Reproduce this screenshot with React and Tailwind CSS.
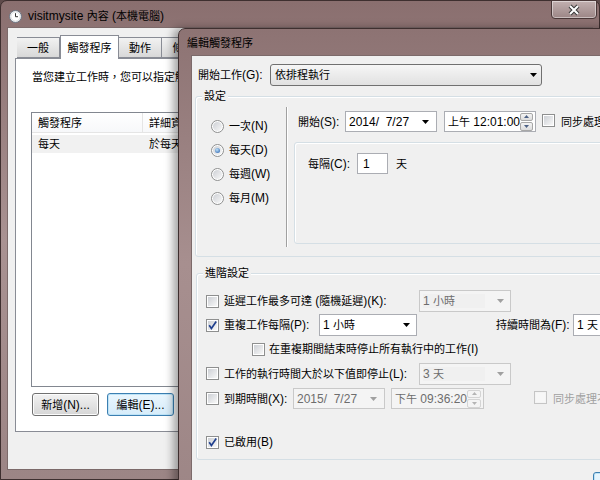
import React from "react";

// CJK runs are set a pixel smaller than the Latin text, like the Windows UI font
function t(s) {
  return String(s)
    .split(/([\u3000-\u9fff\uff00-\uffef]+)/)
    .map((p, i) =>
      i % 2 ? (
        <span key={i} className="text-[11px]">
          {p}
        </span>
      ) : (
        p
      )
    );
}

function Check({ on, off }) {
  return (
    <span
      className={
        "relative inline-block w-[13px] h-[13px] shrink-0 border " +
        (off ? "border-[#c5c5c5] bg-[#f4f4f4]" : "border-[#8e8f8f] bg-white")
      }
    >
      <span
        className={
          "absolute inset-[1px] " +
          (off ? "bg-[#f7f7f7]" : "bg-linear-to-br from-[#cdd0d5] to-[#f8f8f8]")
        }
      />
      {on && (
        <svg className="absolute left-0 top-0" width="11" height="11" viewBox="0 0 11 11">
          <path d="M2.2 5.2 L4.4 8.4 L9.2 1.6" fill="none" stroke="#1f3f8e" strokeWidth="1.7" />
        </svg>
      )}
    </span>
  );
}

function Radio({ on }) {
  return (
    <span className="relative inline-block w-[13px] h-[13px] shrink-0 rounded-full border border-[#8e8f8f] bg-white">
      <span className="absolute inset-[1px] rounded-full bg-linear-to-br from-[#cdd0d5] to-[#f8f8f8]" />
      {on && (
        <span className="absolute left-[3px] top-[3px] w-[5px] h-[5px] rounded-full bg-[radial-gradient(circle_at_40%_35%,#bfe3fa,#1f58a8)]" />
      )}
    </span>
  );
}

function Arrow({ color = "#000" }) {
  return (
    <svg width="7" height="4" viewBox="0 0 7 4">
      <path d="M0 0h7L3.5 4z" fill={color} />
    </svg>
  );
}

function Spin({ off }) {
  const c = off ? "#b4b4b4" : "#4d6185";
  const box = off
    ? "flex-1 flex items-center justify-center rounded-[2px] border border-[#d4d4d4] bg-[#f4f4f4]"
    : "flex-1 flex items-center justify-center rounded-[2px] border border-[#a7a7a7] bg-linear-to-b from-[#f4f4f4] to-[#dcdcdc]";
  return (
    <span className="flex flex-col w-[15px] h-[18px] gap-[1px]">
      <span className={box}>
        <svg width="5" height="3" viewBox="0 0 5 3"><path d="M0 3h5L2.5 0z" fill={c} /></svg>
      </span>
      <span className={box}>
        <svg width="5" height="3" viewBox="0 0 5 3"><path d="M0 0h5L2.5 3z" fill={c} /></svg>
      </span>
    </span>
  );
}

function Picker({ text, w, off, spin }) {
  return (
    <div
      className={
        "flex items-center h-[21px] border pl-[3px] pr-[2px] " +
        w +
        (off ? " border-[#c9c9c9] bg-[#f4f4f4] text-[#6d6d6d]" : " border-[#abadb3] bg-white")
      }
    >
      <span className="flex-1 whitespace-pre">{t(text)}</span>
      {spin ? <Spin off={off} /> : <span className="pr-[5px]"><Arrow color={off ? "#a0a0a0" : "#000"} /></span>}
    </div>
  );
}

function Combo({ text, w, off }) {
  return (
    <div
      className={
        "flex items-center h-[22px] border pl-[3px] pr-[6px] " +
        w +
        (off ? " border-[#c9c9c9] bg-[#f4f4f4] text-[#6d6d6d]" : " border-[#abadb3] bg-white")
      }
    >
      <span className={"flex-1 " + (off ? "bg-[#f0f0f0] mr-[12px]" : "")}>{t(text)}</span>
      <Arrow color={off ? "#a0a0a0" : "#000"} />
    </div>
  );
}

function Button({ children, focus }) {
  return (
    <div
      className={
        "w-[67px] h-[23px] flex items-center justify-center rounded-[3px] border " +
        (focus
          ? "border-[#3c7fb1] bg-linear-to-b from-[#eaf6fd] to-[#d6ecfa] shadow-[inset_0_0_0_1px_#bde3f7]"
          : "border-[#707070] bg-linear-to-b from-[#f2f2f2] to-[#d6d6d6] shadow-[inset_0_0_0_1px_#fcfcfc]")
      }
    >
      {t(children)}
    </div>
  );
}

function Tab({ children, w, on }) {
  return (
    <div
      className={
        "flex items-center justify-center border border-[#898c95] " +
        w +
        (on
          ? " h-[24px] bg-white border-b-0 relative z-10 -mb-[1px]"
          : " h-[21px] mt-[2px] bg-linear-to-b from-[#f2f2f2] to-[#d8d8d8] border-l-0")
      }
    >
      {t(children)}
    </div>
  );
}

export default function App() {
  return (
    <div className="relative w-[600px] h-[480px] overflow-hidden bg-[#5e4a4a] text-[12px] text-black leading-[14px] font-['Liberation_Sans','Noto_Sans_CJK_TC',sans-serif]">
      {/* background window */}
      <div className="absolute left-0 top-0 w-[600px] h-[480px] rounded-t-[7px] border border-[#3e2f2f] bg-linear-to-b from-[#8a6f6f] via-[#a99292] to-[#9c8585] flex flex-col">
        <div className="relative h-[26px] flex items-center pl-[8px] pt-[4px] shrink-0">
          <svg width="13" height="13" viewBox="0 0 13 13">
            <circle cx="6.5" cy="6.5" r="6" fill="#f4f4f4" stroke="#6b7583" />
            <circle cx="6.5" cy="6.5" r="4.6" fill="#fff" stroke="#c8ccd2" strokeWidth="0.6" />
            <path d="M6.5 3.2V6.7H9" fill="none" stroke="#333" strokeWidth="1" />
          </svg>
          <span className="ml-[6px]">{t("visitmysite 內容 (本機電腦)")}</span>
          <div className="absolute right-[2px] -top-[1px] w-[46px] h-[19px] rounded-b-[4px] border border-[#4a3838] bg-linear-to-b from-[#c2b0b0] to-[#9c8686] shadow-[inset_0_0_0_1px_rgba(255,255,255,0.45)] flex items-center justify-center">
            <svg width="14" height="12" viewBox="0 0 14 12">
              <path d="M3 2L11 10M11 2L3 10" stroke="#3a3a3a" strokeWidth="4" />
              <path d="M3 2L11 10M11 2L3 10" stroke="#fff" strokeWidth="2" />
            </svg>
          </div>
        </div>
        <div className="mx-[6px] mb-[9px] flex-1 bg-[#f0f0f0] border border-[#7c6a6a] flex flex-col">
          <div className="flex pl-[9px] pt-[7px]">
            <Tab w="w-[43px] border-l">一般</Tab>
            <Tab w="w-[59px]" on>觸發程序</Tab>
            <Tab w="w-[43px]">動作</Tab>
            <Tab w="w-[44px]">條件</Tab>
            <Tab w="w-[44px]">設定</Tab>
          </div>
          <div className="ml-[7px] w-[570px] h-[374px] bg-white border border-[#898c95] flex flex-col pl-[15px]">
            <div className="pt-[10px] h-[26px] leading-[16px] pl-[1px] whitespace-nowrap">
              {t("當您建立工作時，您可以指定觸發工作的條件。")}
            </div>
            <div className="mt-[27px] w-[320px] h-[275px] border border-[#828790] bg-white flex flex-col">
              <div className="flex h-[20px] border-b border-[#e5e5e5] bg-linear-to-b from-white to-[#f7f8fa]">
                <div className="w-[111px] pl-[6px] flex items-center border-r border-[#e5e5e5]">{t("觸發程序")}</div>
                <div className="pl-[6px] flex items-center">{t("詳細資料")}</div>
              </div>
              <div className="mt-[2px] h-[18px] flex items-center bg-[#f1f1f1]">
                <div className="w-[111px] pl-[6px]">{t("每天")}</div>
                <div className="pl-[6px]">{t("於每天 上午 12:01")}</div>
              </div>
            </div>
            <div className="mt-[6px] flex gap-[8px] pl-[1px]">
              <Button>新增(N)...</Button>
              <Button focus>編輯(E)...</Button>
            </div>
          </div>
        </div>
      </div>

      {/* dialog window */}
      <div className="absolute left-[178px] top-[28px] w-[440px] h-[470px] rounded-t-[7px] border border-[#3e2f2f] bg-linear-to-b from-[#8d7373] via-[#a78f8f] to-[#9d8686] shadow-[-5px_0_8px_rgba(0,0,0,0.35)] flex flex-col">
        <div className="h-[26px] flex items-center pl-[8px] pt-[2px] shrink-0">{t("編輯觸發程序")}</div>
        <div className="ml-[12px] flex-1 bg-[#f0f0f0] border border-[#7c6a6a] flex flex-col">
          <div className="mt-[8px] flex items-center h-[22px] pl-[6px]">
            <span className="w-[72px]">{t("開始工作(G):")}</span>
            <div className="w-[272px] h-[22px] flex items-center rounded-[3px] border border-[#707070] bg-linear-to-b from-[#f6f6f6] to-[#e1e1e1] pl-[4px] pr-[4px]">
              <span className="flex-1">{t("依排程執行")}</span>
              <Arrow />
            </div>
          </div>

          {/* 設定 */}
          <div className="relative mt-[10px] ml-[3px] w-[480px] h-[161px] border border-[#d5dfe5] rounded-[3px] shadow-[inset_1px_1px_0_#fff] flex">
            <span className="absolute -top-[8px] left-[6px] px-[2px] bg-[#f0f0f0]">{t("設定")}</span>
            <div className="w-[90px] pl-[15px] pt-[17px] flex flex-col">
              {[
                ["一次(N)", false],
                ["每天(D)", true],
                ["每週(W)", false],
                ["每月(M)", false],
              ].map(([s, on]) => (
                <div key={s} className="h-[24px] flex items-center gap-[5px]">
                  <Radio on={on} />
                  <span>{t(s)}</span>
                </div>
              ))}
            </div>
            <div className="mt-[10px] h-[140px] border-l border-[#a0a0a0] border-r border-r-white" />
            <div className="pl-[6px] flex flex-col">
              <div className="mt-[14px] h-[21px] pl-[4px] flex items-center">
                <span className="w-[47px]">{t("開始(S):")}</span>
                <Picker w="w-[92px]" text="2014/  7/27" />
                <span className="ml-[7px]"><Picker w="w-[92px]" text="上午 12:01:00" spin /></span>
                <span className="ml-[6px]"><Check /></span>
                <span className="ml-[6px] whitespace-nowrap">{t("同步處理不同時區(Z)")}</span>
              </div>
              <div className="mt-[10px] w-[360px] h-[102px] border border-[#d5dfe5] rounded-[3px] shadow-[inset_1px_1px_0_#fff] pl-[13px] pt-[10px]">
                <div className="flex items-center h-[21px]">
                  <span className="w-[49px]">{t("每隔(C):")}</span>
                  <div className="w-[31px] h-[21px] border border-[#abadb3] bg-white pl-[5px] flex items-center">1</div>
                  <span className="ml-[8px]">{t("天")}</span>
                </div>
              </div>
            </div>
          </div>

          {/* 進階設定 */}
          <div className="relative mt-[16px] ml-[4px] w-[480px] h-[187px] border border-[#d5dfe5] rounded-[3px] shadow-[inset_1px_1px_0_#fff] pt-[15px] flex flex-col">
            <span className="absolute -top-[8px] left-[6px] px-[2px] bg-[#f0f0f0]">{t("進階設定")}</span>
            <div className="h-[24px] pl-[9px] flex items-center">
              <Check />
              <span className="ml-[5px] w-[195px]">{t("延遲工作最多可達 (隨機延遲)(K):")}</span>
              <Combo w="w-[92px]" text="1 小時" off />
            </div>
            <div className="h-[24px] pl-[9px] flex items-center">
              <Check on />
              <span className="ml-[5px] w-[95px]">{t("重複工作每隔(P):")}</span>
              <Combo w="w-[98px]" text="1 小時" />
              <span className="ml-[79px] w-[77px] whitespace-nowrap">{t("持續時間為(F):")}</span>
              <Combo w="w-[80px]" text="1 天" />
            </div>
            <div className="h-[24px] pl-[55px] flex items-center">
              <Check />
              <span className="ml-[4px]">{t("在重複期間結束時停止所有執行中的工作(I)")}</span>
            </div>
            <div className="h-[25px] pl-[9px] flex items-center">
              <Check />
              <span className="ml-[5px] w-[195px] whitespace-nowrap">{t("工作的執行時間大於以下值即停止(L):")}</span>
              <Combo w="w-[92px]" text="3 天" off />
            </div>
            <div className="h-[25px] pl-[9px] flex items-center">
              <Check />
              <span className="ml-[5px] w-[69px]">{t("到期時間(X):")}</span>
              <Picker w="w-[92px]" text="2015/  7/27" off />
              <span className="ml-[6px]"><Picker w="w-[93px]" text="下午 09:36:20" off spin /></span>
              <span className="ml-[50px]"><Check off /></span>
              <span className="ml-[6px] text-[#a0a0a0] whitespace-nowrap">{t("同步處理不同時區(E)")}</span>
            </div>
            <div className="mt-[19px] h-[24px] pl-[9px] flex items-center">
              <Check on />
              <span className="ml-[5px]">{t("已啟用(B)")}</span>
            </div>
          </div>

          <div className="mt-[12px] ml-[401px]">
            <Button focus>確定</Button>
          </div>
        </div>
      </div>
    </div>
  );
}
